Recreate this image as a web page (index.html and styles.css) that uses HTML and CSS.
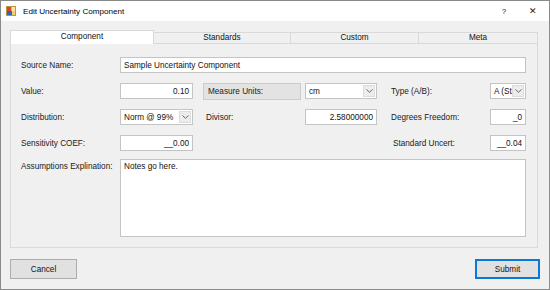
FILE: index.html
```html
<!DOCTYPE html>
<html lang="en">
<head>
  <meta charset="UTF-8">
  <title>Edit Uncertainty Component</title>
  <link rel="stylesheet" href="styles.css">
</head>
<body>
  <div class="window">
    <div class="titlebar">
      <svg class="app-icon" width="10" height="10" viewBox="0 0 10 10">
        <rect x="0.5" y="0.5" width="9" height="9" fill="#f4d26a" stroke="#b89a3a"/>
        <rect x="1" y="1" width="4.5" height="4" fill="#e0412f"/>
        <rect x="1" y="5" width="5" height="4" fill="#2f63c8"/>
        <rect x="5.5" y="1" width="3.5" height="4" fill="#f7e7a8"/>
      </svg>
      <span class="title">Edit Uncertainty Component</span>
      <span class="help">?</span>
      <span class="close">&#x2715;</span>
    </div>

    <div class="client">
      <div class="tabs">
        <div class="tab active">Component</div>
        <div class="tab tab-standards">Standards</div>
        <div class="tab tab-custom">Custom</div>
        <div class="tab tab-meta">Meta</div>
      </div>

      <div class="tab-page">
        <div class="form">
          <label class="lbl">Source Name:</label>
          <div class="field wide">Sample Uncertainty Component</div>

          <label class="lbl">Value:</label>
          <div class="field num">0.10</div>
          <div></div>
          <div class="units-box">Measure Units:</div>
          <div class="combo">
            <span class="combo-text">cm</span>
            <span class="combo-btn"><svg width="7" height="4" viewBox="0 0 7 4"><path d="M0.5 0.5 L3.5 3.3 L6.5 0.5" fill="none" stroke="#6a6a6a"/></svg></span>
          </div>
          <div></div>
          <label class="lbl">Type (A/B):</label>
          <div class="combo">
            <span class="combo-text">A (St</span>
            <span class="combo-btn"><svg width="7" height="4" viewBox="0 0 7 4"><path d="M0.5 0.5 L3.5 3.3 L6.5 0.5" fill="none" stroke="#6a6a6a"/></svg></span>
          </div>

          <label class="lbl">Distribution:</label>
          <div class="combo">
            <span class="combo-text">Norm @ 99%</span>
            <span class="combo-btn"><svg width="7" height="4" viewBox="0 0 7 4"><path d="M0.5 0.5 L3.5 3.3 L6.5 0.5" fill="none" stroke="#6a6a6a"/></svg></span>
          </div>
          <div></div>
          <label class="lbl lbl-pad">Divisor:</label>
          <div class="field num">2.58000000</div>
          <div></div>
          <label class="lbl">Degrees Freedom:</label>
          <div class="field num">_0</div>

          <label class="lbl">Sensitivity COEF:</label>
          <div class="field num">__0.00</div>
          <div class="span-gap"></div>
          <label class="lbl lbl-std">Standard Uncert:</label>
          <div class="field num">__0.04</div>

          <label class="lbl lbl-top">Assumptions Explination:</label>
          <div class="field notes">Notes go here.</div>
        </div>
      </div>

      <div class="buttons">
        <button class="btn">Cancel</button>
        <button class="btn primary">Submit</button>
      </div>
    </div>
  </div>
</body>
</html>
```

FILE: styles.css
```css
* {
  box-sizing: border-box;
}
body {
  margin: 0;
  font-family: "Liberation Sans", Arial, sans-serif;
  font-size: 8.2px;
  color: #111;
  background: #ffffff;
}
.window {
  width: 550px;
  height: 290px;
  border: 1px solid #8a8a8a;
  background: #f0f0f0;
  display: flex;
  flex-direction: column;
}
.titlebar {
  height: 20px;
  background: #ffffff;
  display: flex;
  align-items: center;
  padding-left: 5px;
}
.app-icon {
  margin-right: 7px;
}
.title {
  font-size: 8.1px;
  color: #000;
  flex: 1;
}
.help {
  font-size: 8px;
  width: 28px;
  text-align: center;
  color: #222;
}
.close {
  font-size: 9px;
  width: 29px;
  margin-right: 2px;
  text-align: center;
  color: #222;
}
.client {
  flex: 1;
  padding: 9px 10px 0 9px;
  display: flex;
  flex-direction: column;
}
.tabs {
  display: flex;
  align-items: flex-end;
  height: 14px;
}
.tab {
  height: 12px;
  border: 1px solid #d9d9d9;
  border-left: none;
  background: #f0f0f0;
  display: flex;
  align-items: center;
  justify-content: center;
  line-height: 1;
}
.tab.active {
  width: 144px;
  height: 14px;
  background: #ffffff;
  border: 1px solid #d9d9d9;
  border-bottom: none;
}
.tab-standards {
  width: 137px;
}
.tab-custom {
  width: 128px;
}
.tab-meta {
  width: 119px;
}
.tab-page {
  width: 528px;
  height: 204px;
  border: 1px solid #dadada;
  border-top: none;
  padding: 13px 0 0 10px;
}
.form {
  display: grid;
  grid-template-columns: 99px 73px 10px 102px 72px 14px 99px 36px;
  grid-template-rows: 16px 16px 16px 16px 78px;
  row-gap: 10px;
  align-items: center;
}
.lbl {
  white-space: nowrap;
  color: #1a1a1a;
}
.lbl-pad {
  padding-left: 3px;
}
.lbl-std {
  padding-left: 2px;
}
.lbl-top {
  align-self: start;
  padding-top: 1px;
}
.span-gap {
  grid-column: span 4;
}
.field {
  height: 16px;
  background: #ffffff;
  border: 1px solid #c4c4c4;
  padding: 0 3px;
  display: flex;
  align-items: center;
  white-space: nowrap;
  overflow: hidden;
}
.field.wide {
  grid-column: 2 / 9;
}
.field.num {
  justify-content: flex-end;
}
.field.notes {
  grid-column: 2 / 9;
  height: 78px;
  margin-top: -2px;
  align-items: flex-start;
  padding-top: 2px;
  align-self: start;
}
.units-box {
  width: 98px;
  height: 17px;
  background: #e3e3e3;
  border: 1px solid #cccccc;
  padding-left: 4px;
  display: flex;
  align-items: center;
  color: #1a1a1a;
}
.combo {
  height: 16px;
  background: #ffffff;
  border: 1px solid #c4c4c4;
  display: flex;
  align-items: center;
  overflow: hidden;
}
.combo-text {
  flex: 1;
  padding-left: 3px;
  white-space: nowrap;
  overflow: hidden;
}
.combo-btn {
  width: 12px;
  height: 12px;
  margin-right: 1px;
  background: #ececec;
  border: 1px solid #dcdcdc;
  display: flex;
  align-items: center;
  justify-content: center;
}
.buttons {
  display: flex;
  justify-content: space-between;
  margin-top: 11px;
}
.btn {
  font-family: "Liberation Sans", Arial, sans-serif;
  font-size: 8.2px;
  color: #111;
  height: 20px;
  width: 67px;
  background: #e1e1e1;
  border: 1px solid #adadad;
  padding: 0;
}
.btn.primary {
  width: 65px;
  margin-right: -1px;
  border: 2px solid #0a78d7;
}
```
